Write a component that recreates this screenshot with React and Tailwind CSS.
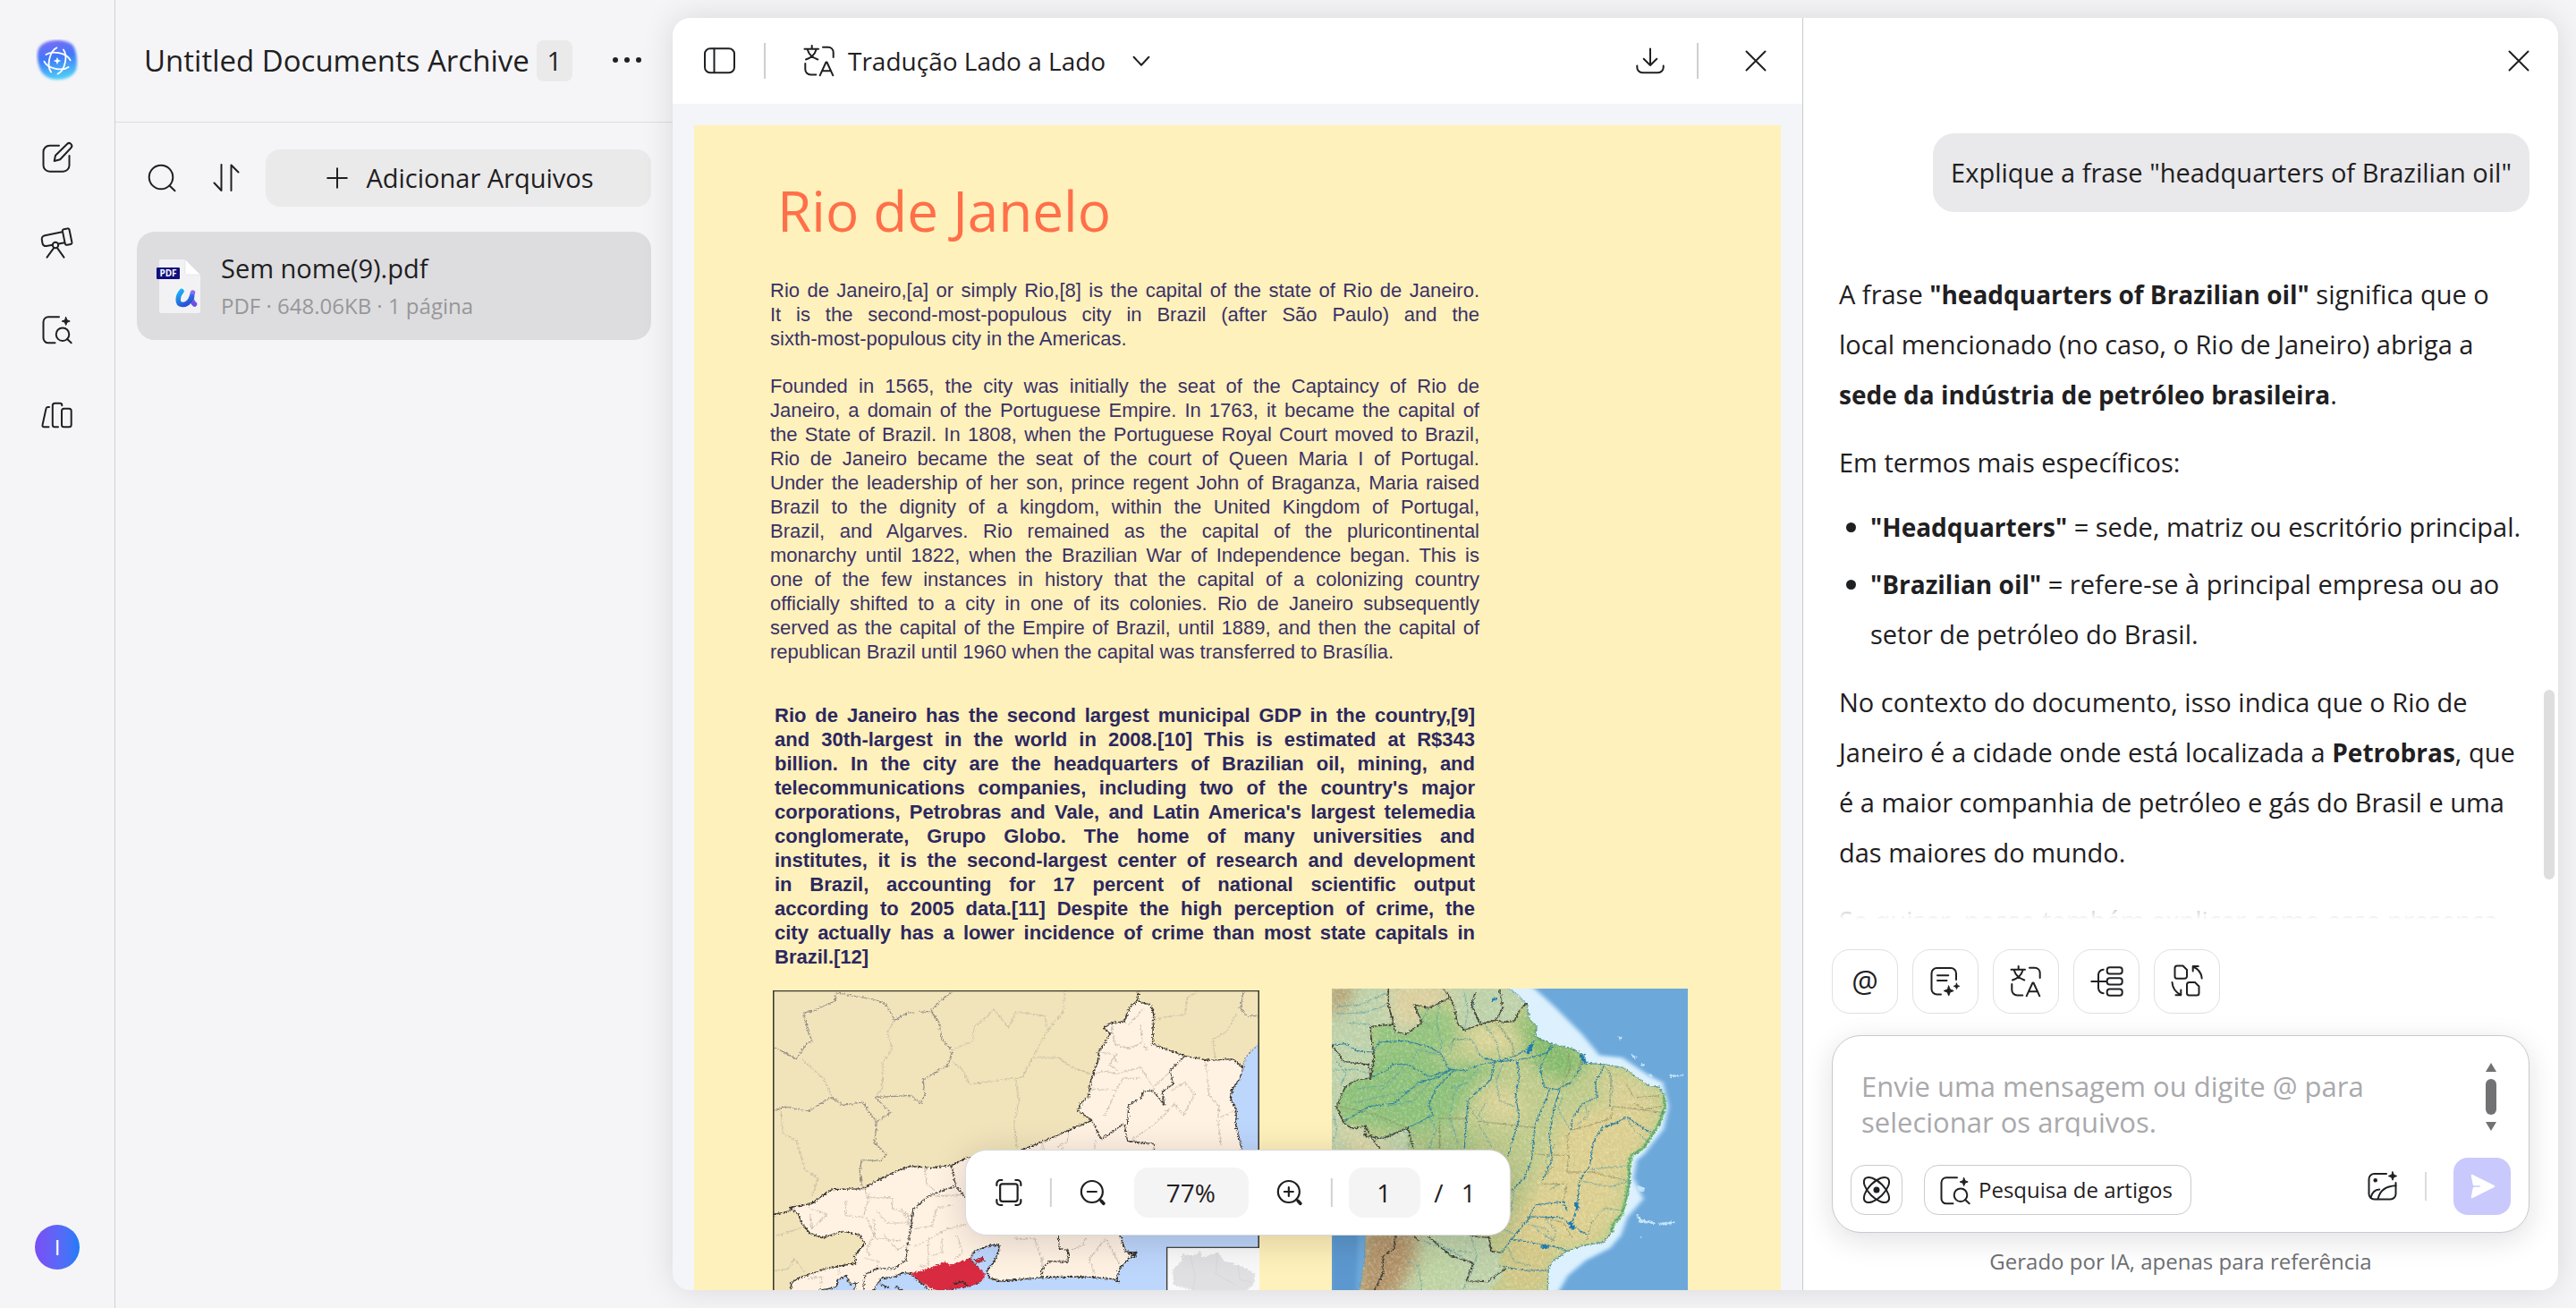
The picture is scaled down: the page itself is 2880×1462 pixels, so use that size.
import React from "react";

const SANS = "font-['Open_Sans','Noto_Sans',sans-serif]";
const ARIAL = "font-['Liberation_Sans',Arial,sans-serif]";

function Icon({ children, className = "size-10", strokeWidth = 2 }) {
  return (
    <svg
      viewBox="0 0 40 40"
      className={`${className} shrink-0`}
      fill="none"
      stroke="currentColor"
      strokeWidth={strokeWidth}
      strokeLinecap="round"
      strokeLinejoin="round"
      aria-hidden="true"
    >
      {children}
    </svg>
  );
}

function sparkle(x, y, r) {
  const k = r * 0.28;
  return `M${x} ${y - r}L${x + k} ${y - k}L${x + r} ${y}L${x + k} ${y + k}L${x} ${y + r}L${x - k} ${y + k}L${x - r} ${y}L${x - k} ${y - k}Z`;
}

function Sparkle({ x, y, r }) {
  return <path d={sparkle(x, y, r)} fill="currentColor" strokeWidth="1" />;
}

const EditIcon = () => (
  <Icon>
    <path d="M22 6.700H11.500a7 7 0 0 0-7 7v15a7 7 0 0 0 7 7h15a7 7 0 0 0 7-7V18" />
    <path d="M16.700 24l1.300-6.200L31 5a3 3 0 0 1 4.400 4.200L23.200 22.300z" />
  </Icon>
);

const TelescopeIcon = () => (
  <Icon>
    <path d="M25.500 7.300L6 11.200a4 4 0 0 0-3.200 4.600l.7 4.200a3.600 3.600 0 0 0 4.300 3l7-1.300M21.500 20.500l6.700-1.300" />
    <path d="M27.300 4.200l4-.8a1.800 1.800 0 0 1 2.200 1.400l2.900 14a1.800 1.800 0 0 1-1.400 2.200l-4 .8a1.800 1.800 0 0 1-2.200-1.400l-2.900-14a1.800 1.800 0 0 1 1.400-2.200z" />
    <circle cx="18" cy="22" r="3.200" />
    <path d="M16.200 25.200L8.500 35.700M20 25.200l7.500 10.500" />
  </Icon>
);

const DocSearchIcon = ({ className }) => (
  <Icon className={className}>
    <path d="M22 6.300H10a5.500 5.500 0 0 0-5.500 5.500v18a5.500 5.500 0 0 0 5.500 5.500h7.500" />
    <Sparkle x={29.700} y={11} r={4.500} />
    <circle cx="26" cy="25.700" r="7.300" />
    <path d="M31.200 31l4.500 4.300" />
  </Icon>
);

const LibraryIcon = () => (
  <Icon>
    <path d="M11 11H9.500a2 2 0 0 0-2 1.700L3.500 31a1.700 1.700 0 0 0 1.700 2.200h5.300" />
    <path d="M25.300 9.300V9a2.300 2.300 0 0 0-2.300-2.300h-5.700A2.500 2.500 0 0 0 14.800 9.200v21.500a2.500 2.500 0 0 0 2.500 2.500H21" />
    <rect x="25" y="12.700" width="10.700" height="20.500" rx="2.500" />
  </Icon>
);

const TranslateIcon = ({ className }) => (
  <Icon className={className}>
    <path d="M11.700 3v3.500M3.500 6.700H19M7 8c1.300 4.500 5.500 8.500 11.300 10.500M16.300 8C15 12.500 11 16.500 5 18.500" />
    <path d="M24 4.700h6a5.700 5.700 0 0 1 5.700 5.700V16M4.300 23v6.500a6 6 0 0 0 6 6h6" />
    <path d="M20.700 36.300L27.500 21.500h1l6.800 14.800M22.900 31.300h10.300" />
  </Icon>
);

const SummaryIcon = () => (
  <Icon>
    <path d="M32 18v-7a6 6 0 0 0-6-6H10.500a6 6 0 0 0-6 6v17.500a6 6 0 0 0 6 6H15" />
    <path d="M11 13.300h12.300M11 19h10.500" />
    <Sparkle x={23.700} y={30.500} r={5.500} />
    <Sparkle x={32.500} y={25.300} r={3.200} />
  </Icon>
);

const MindMapIcon = () => (
  <Icon>
    <path d="M3.300 20H20M16.700 6.700A6 6 0 0 0 11 12.700v14.600a6 6 0 0 0 5.700 6" />
    <rect x="20.700" y="4.300" width="17" height="7.300" rx="3" />
    <rect x="20.700" y="16.300" width="17" height="7.300" rx="3" />
    <rect x="20.700" y="28.400" width="17" height="7.300" rx="3" />
  </Icon>
);

const SwapIcon = () => (
  <Icon>
    <path d="M9 2.500h6.500L20 7v7.300a2.500 2.500 0 0 1-2.500 2.500H9a2.500 2.500 0 0 1-2.500-2.500V5A2.500 2.500 0 0 1 9 2.500z" />
    <path d="M22.500 21H29l4.500 4.500v7.500a2.500 2.500 0 0 1-2.500 2.500h-8.500A2.500 2.500 0 0 1 20 33v-9.500a2.500 2.500 0 0 1 2.500-2.500z" />
    <path d="M26.700 8.500V3h6M27 3.500c5.500 2.500 9.300 7 9.700 13" />
    <path d="M13.300 29.500v5.800H7.500M13 35C7.500 32 4 27.500 3.500 21" />
  </Icon>
);

const AtomIcon = () => (
  <Icon>
    <ellipse cx="20" cy="20" rx="18" ry="8.500" transform="rotate(45 20 20)" />
    <ellipse cx="20" cy="20" rx="18" ry="8.500" transform="rotate(-45 20 20)" />
    <circle cx="20" cy="20" r="2.500" fill="currentColor" />
  </Icon>
);

const ImageIcon = () => (
  <Icon>
    <path d="M24 6H10.500a6 6 0 0 0-6 6v16.500a6 6 0 0 0 6 6h18a6 6 0 0 0 6-6V16" />
    <circle cx="11.700" cy="13.300" r="1.300" fill="currentColor" />
    <path d="M6.500 32.500c1.500-5.500 4.500-8.800 9.700-9M14.500 34.300c2-9 7.500-14.500 20-15" />
    <Sparkle x={31} y={8.500} r={4.700} />
  </Icon>
);

const DownloadIcon = () => (
  <Icon>
    <path d="M20 6.500v18M12.700 17.700L20 25l7.300-7.300M5.300 25.500v1.700a6 6 0 0 0 6 6h17.400a6 6 0 0 0 6-6v-1.700" />
  </Icon>
);

const CloseIcon = () => (
  <Icon>
    <path d="M9.500 9.500l21 21M30.500 9.500l-21 21" />
  </Icon>
);

const PanelIcon = () => (
  <Icon>
    <rect x="4" y="6.300" width="33" height="27" rx="6" />
    <path d="M14.500 6.500v26.500" />
  </Icon>
);

const SearchIcon = () => (
  <Icon>
    <circle cx="19" cy="19" r="13.300" />
    <path d="M28.500 28.500l6 5.800" />
  </Icon>
);

const SortIcon = () => (
  <Icon>
    <path d="M14.500 5v29L6.500 25.500M25.500 34V5.500l8 8" />
  </Icon>
);

const FitIcon = () => (
  <Icon strokeWidth={2.200}>
    <rect x="10.300" y="10.300" width="19.500" height="19.500" rx="2.500" />
    <path d="M6.500 12v-2a4 4 0 0 1 4-4h2M27.500 6h2a4 4 0 0 1 4 4v2M33.500 28v2a4 4 0 0 1-4 4h-2M12.500 34h-2a4 4 0 0 1-4-4v-2" />
  </Icon>
);

function ZoomIcon({ plus }) {
  return (
    <Icon strokeWidth={2.200}>
      <circle cx="19" cy="19" r="12" />
      <path d={plus ? "M14 19h10M19 14v10" : "M14 19h10"} />
      <path d="M27.500 27.500l1.500 1.500" />
      <path d="M29.500 29.500l2.500 2.700" strokeWidth="3.800" />
    </Icon>
  );
}

function Logo() {
  return (
    <svg viewBox="0 0 48 48" className="size-12" aria-hidden="true">
      <defs>
        <linearGradient id="logoFill" x1="0.300" y1="0" x2="0.500" y2="1">
          <stop offset="0" stopColor="#7a6cf6" />
          <stop offset="0.450" stopColor="#3f78f8" />
          <stop offset="1" stopColor="#4fd0f8" />
        </linearGradient>
        <filter id="logoSoft" x="-20%" y="-20%" width="140%" height="140%">
          <feGaussianBlur stdDeviation="1.500" />
        </filter>
      </defs>
      <path
        d="M8 5C17-1 34 0 41 6c5 6 6 21 4 28-3 8-13 11-21 11C14 45 6 39 4 31 1 21 0 10 8 5z"
        fill="url(#logoFill)"
        filter="url(#logoSoft)"
      />
      <g fill="none" stroke="#fff" strokeWidth="1.800" strokeLinecap="round">
        <ellipse cx="24" cy="24" rx="15.500" ry="9" transform="rotate(12 24 24)" pathLength="100" strokeDasharray="39 11" strokeDashoffset="-6" />
        <ellipse cx="24" cy="24" rx="15.500" ry="9" transform="rotate(102 24 24)" pathLength="100" strokeDasharray="39 11" strokeDashoffset="-6" />
      </g>
      <path d={sparkle(24, 24, 4.200)} fill="#fff" />
    </svg>
  );
}

function PdfIcon() {
  return (
    <svg viewBox="0 0 52 64" className="h-16 w-[52px] shrink-0" aria-hidden="true">
      <defs>
        <linearGradient id="uLeft" x1="0" y1="0" x2="0.600" y2="1">
          <stop offset="0" stopColor="#16b4f6" />
          <stop offset="1" stopColor="#2b4fd8" />
        </linearGradient>
        <linearGradient id="uRight" x1="0" y1="0" x2="0" y2="1">
          <stop offset="0" stopColor="#8f6bf5" />
          <stop offset="1" stopColor="#6a4fe0" />
        </linearGradient>
      </defs>
      <path d="M4 2h28l17 17v41a2 2 0 0 1-2 2H5a2 2 0 0 1-2-2V3a1 1 0 0 1 1-1z" fill="#f2f2f4" />
      <path d="M32 2l17 17H34a2 2 0 0 1-2-2z" fill="#fff" stroke="#dcdce0" strokeWidth="0.600" />
      <rect x="0" y="11" width="26" height="13" rx="1" fill="#10107e" />
      <text x="13" y="21.300" textAnchor="middle" fontSize="10" fontWeight="700" fill="#fff" fontFamily="Open Sans, sans-serif">
        PDF
      </text>
      <path d="M40.500 39c-1.500 4-2 10 2 13" fill="none" stroke="url(#uRight)" strokeWidth="5.500" strokeLinecap="round" />
      <path d="M28 37.500c-4.500 5-6 14.500 1 15 5 .3 8.500-4 10.500-9" fill="none" stroke="url(#uLeft)" strokeWidth="5.500" strokeLinecap="round" />
    </svg>
  );
}

/* Political map of the state of Rio de Janeiro. */
const GREY_BORDERS = [
  "M36 240L65 255L105 280L130 235L150 220L138 180L125 125L150 120L218 85L220 58L270 68L330 80L365 95L392 150L430 125L498 120L518 92L557 58",
  "M498 120L522 160L530 215L560 252L548 300L475 350L480 400L468 430L440 402L395 405L335 408L380 460L340 490L333 560L368 600L350 622L295 618L290 660L298 715",
  "M36 455L70 440L140 455L208 408L240 435L300 425L318 460L340 490",
  "M1410 55L1402 110L1420 135L1457 136",
];
const FAINT_BORDERS = [
  "M392 150L370 190L385 245L358 290L355 380L335 408",
  "M120 280L155 315L185 345L208 408",
  "M560 250L620 220L625 170L660 140L682 112L725 175L745 122L830 135L838 185L795 275L765 340L610 365L590 315L560 290",
  "M888 55L885 120L838 185M795 275L870 275L905 305L968 332",
  "M745 345L755 420L740 500L750 580",
  "M60 455L65 530L105 555L130 650L168 680L150 740",
  "M1275 58L1245 75L1240 130L1180 140L1150 150M1390 130L1360 190L1320 215L1328 278",
  "M120 845L60 870L45 870M36 990L80 985L100 950L128 995",
];
const STATE =
  "M85 778L150 765L185 735L210 718L300 715L345 685L410 650L440 640L500 645L558 637L600 612L680 610L770 582L850 545L968 485L928 455L935 430L958 405L965 350L985 290L988 255L1003 230L1022 195L1002 175L1020 160L1062 155L1078 108L1100 85L1140 100L1148 130L1145 230L1180 245L1240 270L1310 285L1380 280L1410 310L1400 345L1378 380L1372 410L1390 450L1388 500L1405 580L1390 640L1250 740L1120 790L1050 830L1053 880L1065 925L1095 930L1080 945L1050 980L1040 1015L1048 1030L1030 1018L950 1010L830 1012L700 1025L670 1015L662 990L682 960L695 930L697 903L670 905L625 925L612 950L650 1000L640 1030L600 1044L500 1060L470 1032L440 1000L415 996L395 1010L355 1015L335 1045L320 1080L270 1060L282 1030L262 1036L250 1006L225 1020L222 1045L170 1056L150 1110L88 1110L90 1030L120 1010L200 980L278 965L275 940L305 900L290 870L240 858L180 880L145 865L120 830L110 800Z";
const STATE_REGIONS = [
  "M558 637L570 705L600 745L640 800",
  "M570 705L490 740L445 785L438 860L430 900L425 955L390 982L335 985L305 1005L300 1060",
  "M968 485L995 550L1062 497L1072 555L1150 565L1150 600",
  "M1072 497L1075 435L1112 410L1118 390L1145 385L1180 435L1172 390L1205 365L1196 318L1238 272",
  "M870 870L872 915L900 922L898 960L845 958L822 985L820 1012",
];
const STATE_FAINT = [
  "M975 330L1005 320L1040 330L1110 308L1150 380M1005 470L1040 385L965 380",
  "M1110 345L1060 345L1040 380M1025 165L1035 230L1075 245L1115 225L1130 250",
  "M1085 550L1150 500L1210 430L1235 470L1268 400L1240 358L1200 385",
  "M1300 290L1310 400L1340 440L1335 480L1345 570M1345 475L1388 450",
  "M140 780L195 800L150 850L145 800M250 755L248 805L300 810L320 730M305 715L310 745L385 745L385 780L430 800L435 830L370 830L340 790",
  "M310 810L335 880L410 890M410 780L440 850M480 645L485 700L510 720",
  "M450 910L490 885L490 975L465 975M490 885L545 850L620 830M530 880L530 930L500 940M575 870L590 930L570 950M500 740L600 735M450 850L500 840L515 780L560 770",
  "M740 880L770 885L800 880L825 970M820 990L825 945M1010 880L960 950L975 1000M1010 885L1040 950L1050 970M910 920L940 905L950 880",
  "M825 560L825 600M900 530L895 560L865 575M880 570L890 600M975 580L980 550",
  "M1040 260L1020 300L1045 320M985 255L1030 265L1040 290M1075 165L1120 110M1110 165L1115 225M1150 370L1200 320",
  "M330 810L335 860L310 920L320 940M140 1015L180 1010L175 1045M230 975L230 1005M300 945L345 960L340 985M360 870L400 920L430 900",
];

function RioMap() {
  return (
    <svg viewBox="36 50 1421 1260" preserveAspectRatio="none" className="mt-0.5 h-[420px] w-[544px] shrink-0" role="img" aria-label="Mapa do estado do Rio de Janeiro">
      <defs>
        <filter id="coast" x="-5%" y="-5%" width="110%" height="110%">
          <feTurbulence type="fractalNoise" baseFrequency="0.180" numOctaves="2" seed="4" />
          <feDisplacementMap in="SourceGraphic" scale="14" xChannelSelector="R" yChannelSelector="G" />
        </filter>
      </defs>
      <rect x="36" y="50" width="1421" height="1260" fill="#f1e4bb" />
      <g filter="url(#coast)" fill="none" strokeLinejoin="round">
        <path
          d="M1470 205L1445 240L1418 272L1408 310L1300 600L900 800L640 890L600 960L400 1000L240 1000L150 1060L120 1320L1470 1320Z"
          fill="#bdd6fc"
          stroke="#77736b"
          strokeWidth="2"
        />
        <g stroke="#978f88" strokeWidth="3.500">
          {GREY_BORDERS.map((d) => <path key={d} d={d} />)}
        </g>
        <g stroke="#cdc3a6" strokeWidth="3">
          {FAINT_BORDERS.map((d) => <path key={d} d={d} />)}
        </g>
        <path d={STATE} fill="#fff2e3" stroke="#3a362f" strokeWidth="4" />
        <path d="M36 803L85 790L95 775M1100 88L1104 50" stroke="#3a362f" strokeWidth="4" />
        <g stroke="#cdc1b2" strokeWidth="2.800">
          {STATE_FAINT.map((d) => <path key={d} d={d} />)}
        </g>
        <g stroke="#45403a" strokeWidth="3.500">
          {STATE_REGIONS.map((d) => <path key={d} d={d} />)}
        </g>
        <path d="M440 998L485 985L540 960L552 970L612 950L632 975L655 1000L650 1022L620 1040L520 1058L500 1050L470 1030Z" fill="#d8293f" />
        <path d="M625 955L650 945L652 958L632 962Z" fill="#d8293f" stroke="#5a2020" strokeWidth="2" />
        <path d="M565 1035L590 1026L605 1040M350 1035L375 1048M395 1045L415 1058M1075 932L1098 928L1092 942Z" stroke="#33302b" strokeWidth="5" />
      </g>
      <rect x="1187" y="912" width="275" height="400" fill="#f9f9fa" stroke="#3a362f" strokeWidth="3.500" />
      <path
        filter="url(#coast)"
        d="M1205 985L1230 960L1232 932L1262 940L1285 925L1290 945L1335 928L1355 958L1400 972L1445 1000L1440 1030L1420 1060L1390 1110L1340 1160L1310 1090L1262 1056L1205 1036Z"
        fill="#e0e0e2"
      />
      <path d="M1255 940L1270 1010L1262 1056M1335 930L1330 1000L1390 1040M1395 975L1400 1020L1440 1030" fill="none" stroke="#d4d4d6" strokeWidth="2" />
      <path d="M38 1310V52H1455V912" fill="none" stroke="#3a362f" strokeWidth="4" />
    </svg>
  );
}

/* Relief map of Brazil. */
const COAST =
  "775 95L785 150L805 170L800 205L845 230L900 245L930 262L945 295L1000 300L1050 310L1085 340L1120 370L1150 375L1163 400L1167 440L1150 500L1125 545L1105 580L1072 605L1065 640L1068 690L1055 760L1045 800L1020 835L1015 865L995 895L940 905L890 925L850 960L838 985L835 1056L828 1310";
const CONTINENT = `M200 20L690 20L745 60L${COAST}L300 1310L303 1056L318 960L320 870L260 700L215 600Z`;
const BRAZIL = `M${COAST}L690 1310L665 1060L700 1020L716 985L697 975L702 930L675 925L670 880L620 875L600 780L470 700L440 580L440 512L370 548L320 540L320 505L285 515L258 495L238 440L265 370L300 350L335 345L345 270L335 200L335 172L400 165L405 190L435 198L480 160L458 98L500 110L560 75L572 110L580 160L600 185L645 165L690 150L710 158L740 155L760 110Z`;
const SHELF =
  "M700 20L770 20L850 105L930 200L980 272L1045 280L1120 340L1158 362L1174 440L1160 515L1108 595L1084 620L1075 680L1102 750L1080 780L1058 810L1040 870L1010 912L940 955L890 1005L865 1056L860 1320L780 1320L600 600Z";
const MAIN_RIVERS = [
  "M225 235L260 230L300 255L340 258L360 225L430 220L500 240L535 265L555 315L600 320L650 298L700 288L750 268L785 240L800 215",
  "M340 340L380 320L400 298L440 300L470 320L500 340L560 318",
  "M640 265L660 280L700 290L745 285L790 275L830 262L850 240",
  "M560 318L520 345L470 360L400 430L330 440L260 490",
  "M845 235L815 310L825 375L870 385L855 440L840 540L848 620L820 690",
  "M840 385L830 420L800 500L790 620L770 680L735 720",
  "M750 290L755 345L745 400L755 480L735 560L722 610",
  "M685 290L675 350L610 420L605 500L600 580",
  "M1035 495L990 510L965 560L955 640L925 690L920 770L905 830",
  "M1125 528L1060 475L1020 500L985 512",
  "M705 930L730 890L780 820L800 770L880 760L890 790",
  "M780 810L870 812L905 840L945 870",
  "M735 885L830 905L870 915L890 925M700 975L770 990L835 990",
  "M570 320L520 380L500 430L510 470L440 512",
  "M940 262L930 310L900 360L870 380M995 305L970 360L975 410L935 430L905 480L902 520",
];
const SMALL_RIVERS = [
  "M240 105L300 100L380 60M240 130L320 125L380 100M270 160L330 165M225 320L290 315L330 330M250 370L265 330L240 290",
  "M530 100L520 160L535 220L530 265M500 110L480 150L510 180M600 60L610 120L600 185M620 80L640 160",
  "M430 300L400 350L360 390M480 360L440 390L350 410L290 430M420 320L370 370L300 380M500 360L460 420L380 440",
  "M560 260L570 215L620 215L640 260M700 165L730 220L745 260M660 170L690 220L700 280M450 290L470 250L540 270",
  "M600 350L570 400L560 470M640 310L610 360L560 380M710 300L690 350L700 420L740 440M800 290L820 330",
  "M500 470L520 520L500 580M560 480L580 560M640 500L680 580M660 430L640 470L670 505",
  "M880 400L865 450L900 520M1010 320L1020 380L1010 440M1060 480L1080 520L1120 560M940 430L950 470L920 500",
  "M960 650L1060 640M930 690L1010 710L1065 690M960 830L1000 780L1045 790M800 850L850 890M830 820L860 860L850 890",
  "M740 720L730 800M760 830L830 850L850 890M870 700L840 720M860 560L830 620L840 660",
  "M480 890L550 920L620 930M500 880L620 965M440 960L470 975L480 1056M620 880L635 940L620 1000L595 1056",
  "M230 470L240 520L228 560M345 555L420 520L460 540M450 550L440 580M690 840L745 870M720 900L740 960L790 975",
];
const BORDERS = [
  "M385 45L385 100L400 165M560 75L540 45M630 60L620 100L645 165M700 50L708 110L690 150",
  "M225 235L260 290L330 300L335 345M320 505L345 560L360 580M440 512L455 580",
  "M500 878L560 940L625 965L605 1025L665 1028L716 985M620 875L670 880L675 925L702 930",
  "M405 870L400 920L370 940L370 1000L345 1056M460 878L470 890",
  "M335 172L335 200L345 270L335 345L300 350L265 370L238 440L258 495L285 515L320 505",
  "M335 172L400 165L405 190L435 198L480 160L458 98L500 110L560 75L572 110L580 160L600 185L645 165L690 150L710 158L740 155L760 110L775 95",
  "M320 505L320 540L370 548L440 512",
];
const STATE_LINES = [
  "M605 480L530 480L530 580M605 420L640 490L800 512M740 275L735 230L690 160M555 240L570 215L595 215M870 385L900 310L890 250M935 270L920 320",
  "M902 520L950 505L1015 480L1020 440L1160 460M800 600L895 605L890 540L902 520M895 605L890 660L960 660L1065 690M1000 310L1015 340L1010 440",
  "M240 440L330 460L440 512M820 690L850 640M820 700L890 700L880 760M780 820L735 885M905 880L880 830L830 815M960 830L945 890M1060 370L1080 410L1150 405M1080 430L1110 450L1155 440",
];

function BrazilMap() {
  return (
    <svg viewBox="225 45 1007 1260" preserveAspectRatio="none" className="h-[420px] w-[398px] shrink-0" role="img" aria-label="Mapa de relevo do Brasil">
      <defs>
        <filter id="shore" x="-5%" y="-5%" width="110%" height="110%">
          <feTurbulence type="fractalNoise" baseFrequency="0.160" numOctaves="2" seed="9" />
          <feDisplacementMap in="SourceGraphic" scale="12" xChannelSelector="R" yChannelSelector="G" />
        </filter>
        <filter id="soft" x="-10%" y="-10%" width="120%" height="120%">
          <feGaussianBlur stdDeviation="5" />
        </filter>
        <filter id="relief" x="0" y="0" width="100%" height="100%">
          <feTurbulence type="fractalNoise" baseFrequency="0.120 0.070" numOctaves="4" seed="3" />
          <feColorMatrix values="0 0 0 0 0.450  0 0 0 0 0.380  0 0 0 0 0.180  1.800 0 0 0 -0.800" />
          <feComposite in2="SourceGraphic" operator="in" />
        </filter>
        <filter id="ridge" x="0" y="0" width="100%" height="100%">
          <feTurbulence type="fractalNoise" baseFrequency="0.160 0.100" numOctaves="3" seed="17" />
          <feColorMatrix values="0 0 0 0 1  0 0 0 0 0.980  0 0 0 0 0.780  0 2 0 0 -0.850" />
          <feComposite in2="SourceGraphic" operator="in" />
        </filter>
        <filter id="blotch" x="-20%" y="-20%" width="140%" height="140%">
          <feGaussianBlur stdDeviation="24" />
        </filter>
        <clipPath id="brazilShape"><path d={BRAZIL} /></clipPath>
        <clipPath id="continentShape"><path d={CONTINENT} /></clipPath>
      </defs>
      <rect x="225" y="45" width="1007" height="1260" fill="#6da8db" />
      <g filter="url(#soft)">
        <path d={SHELF} fill="#9fcdf0" stroke="#9fcdf0" strokeWidth="14" />
        <path d={SHELF} fill="#dcf1fd" />
        <path d="M225 860L300 860L285 1320L225 1320Z" fill="#5b98cf" />
      </g>
      <g fill="#c4e4f9" filter="url(#shore)">
        <path d="M1090 705l22 8-8 14-14-6zM1085 800l20 20 30 5 5 10-45-5zM1150 830l45-5v8l-40 6zM1070 265l18 8-5 12zM1120 330l14 6-6 10zM1180 335l40-3v6l-38 5z" />
        <path d="M1035 205l12 4-6 8zM1100 295l10 6-8 6zM1095 875l8 3-6 5z" />
      </g>
      <g filter="url(#shore)">
        <path d={CONTINENT} fill="#bcd2ab" stroke="#4d8fae" strokeWidth="2" />
        <g clipPath="url(#continentShape)">
          <g filter="url(#blotch)">
            <path d="M225 30L290 40L225 160Z" fill="#b08a5c" />
            <path d="M390 30L560 30L560 90L430 190L390 130Z" fill="#dccf9f" />
            <path d="M225 480L330 540L420 600L300 640Z" fill="#ded8a8" />
            <path d="M310 850L470 850L465 960L400 1090L290 1090Z" fill="#b08f66" />
            <path d="M480 880L600 960L560 1060L450 1060Z" fill="#bcd3a2" />
          </g>
        </g>
        <path d={BRAZIL} fill="#bdcb8b" />
        <g clipPath="url(#brazilShape)">
          <g filter="url(#blotch)">
            <path d="M220 330L420 220L560 300L720 290L640 360L560 500L440 530L230 490Z" fill="#88c078" />
            <path d="M330 150L560 110L590 230L500 270L340 270Z" fill="#8fc37b" />
            <path d="M740 120L800 150L950 270L900 370L800 310Z" fill="#7fb969" />
            <path d="M610 180L740 180L740 260L610 250Z" fill="#ddd59a" />
            <path d="M640 380L740 380L780 480L670 500Z" fill="#d8d296" />
            <path d="M440 520L640 510L620 640L470 640Z" fill="#a6c583" />
            <path d="M890 470L1150 400L1120 560L1050 660L1040 800L960 900L800 920L720 860L800 700Z" fill="#dccf8f" />
            <path d="M1000 320L1090 360L1160 440L1000 470Z" fill="#d9cf93" />
            <path d="M720 880L860 900L820 1060L700 1060Z" fill="#d2c684" />
          </g>
        </g>
        <path d="M1163 400L1167 440L1150 500L1125 545L1105 580L1072 605L1065 640L1065 690L1055 760L1045 800L1020 835L1015 865" fill="none" stroke="#7fbf6a" strokeWidth="10" />
        <path d={CONTINENT} fill="#fff" filter="url(#relief)" opacity="0.300" />
        <path d={CONTINENT} fill="#fff" filter="url(#ridge)" opacity="0.400" />
        <g fill="none" strokeLinejoin="round" strokeLinecap="round">
          <g stroke="#8c8a64" strokeWidth="2">{STATE_LINES.map((d) => <path key={d} d={d} />)}</g>
          <g stroke="#5f9ea6" strokeWidth="2">{SMALL_RIVERS.map((d) => <path key={d} d={d} />)}</g>
          <g stroke="#2b7fa3" strokeWidth="3">{MAIN_RIVERS.map((d) => <path key={d} d={d} />)}</g>
          <path d="M915 765L920 785M900 830L905 850M820 910L835 912M790 235L780 260M680 85L688 80M930 270L945 295" stroke="#1d79b5" strokeWidth="9" />
          <path d={`M${COAST}`} stroke="#4c8f86" strokeWidth="2.500" />
          <g stroke="#46463f" strokeWidth="4">{BORDERS.map((d) => <path key={d} d={d} />)}</g>
        </g>
      </g>
    </svg>
  );
}

const INTRO = [
  "Rio de Janeiro,[a] or simply Rio,[8] is the capital of the state of Rio de Janeiro.",
  "It is the second-most-populous city in Brazil (after São Paulo) and the",
  "sixth-most-populous city in the Americas.",
];
const HISTORY = [
  "Founded in 1565, the city was initially the seat of the Captaincy of Rio de",
  "Janeiro, a domain of the Portuguese Empire. In 1763, it became the capital of",
  "the State of Brazil. In 1808, when the Portuguese Royal Court moved to Brazil,",
  "Rio de Janeiro became the seat of the court of Queen Maria I of Portugal.",
  "Under the leadership of her son, prince regent John of Braganza, Maria raised",
  "Brazil to the dignity of a kingdom, within the United Kingdom of Portugal,",
  "Brazil, and Algarves. Rio remained as the capital of the pluricontinental",
  "monarchy until 1822, when the Brazilian War of Independence began. This is",
  "one of the few instances in history that the capital of a colonizing country",
  "officially shifted to a city in one of its colonies. Rio de Janeiro subsequently",
  "served as the capital of the Empire of Brazil, until 1889, and then the capital of",
  "republican Brazil until 1960 when the capital was transferred to Brasília.",
];
const ECONOMY = [
  "Rio de Janeiro has the second largest municipal GDP in the country,[9]",
  "and 30th-largest in the world in 2008.[10] This is estimated at R$343",
  "billion. In the city are the headquarters of Brazilian oil, mining, and",
  "telecommunications companies, including two of the country's major",
  "corporations, Petrobras and Vale, and Latin America's largest telemedia",
  "conglomerate, Grupo Globo. The home of many universities and",
  "institutes, it is the second-largest center of research and development",
  "in Brazil, accounting for 17 percent of national scientific output",
  "according to 2005 data.[11] Despite the high perception of crime, the",
  "city actually has a lower incidence of crime than most state capitals in",
  "Brazil.[12]",
];

function Justified({ lines, className = "" }) {
  return (
    <p className={`text-[22px] leading-[27px] ${className}`}>
      {lines.map((line, i) => (
        <span key={line} className={i < lines.length - 1 ? "block text-justify [text-align-last:justify]" : "block"}>
          {line}{" "}
        </span>
      ))}
    </p>
  );
}

function Rail() {
  return (
    <nav className="flex w-[129px] shrink-0 flex-col items-center border-r border-[#cfd0d3] pt-11 pb-[43px]">
      <a href="#inicio" aria-label="Início"><Logo /></a>
      <div className="mt-16 flex flex-col gap-14">
        <button type="button" aria-label="Nova conversa"><EditIcon /></button>
        <button type="button" aria-label="Explorar"><TelescopeIcon /></button>
        <button type="button" aria-label="Pesquisar documentos"><DocSearchIcon /></button>
        <button type="button" aria-label="Biblioteca"><LibraryIcon /></button>
      </div>
      <button type="button" className="mt-auto size-[50px] rounded-full bg-linear-to-r from-[#7a4df5] to-[#1a7cf8] text-2xl text-white">
        I
      </button>
    </nav>
  );
}

function FilesPanel() {
  return (
    <aside className="w-[623px] shrink-0">
      <header className="flex h-[137px] items-center border-b border-[#dcdde0] pr-[31px] pl-8">
        <h1 className="text-[33px] whitespace-nowrap">Untitled Documents Archive</h1>
        <span className="ml-2 flex h-[46px] w-10 items-center justify-center rounded-lg bg-[#eaeaeb] text-[29px]">1</span>
        <button type="button" aria-label="Mais opções" className="ml-auto">
          <Icon>
            <g fill="currentColor" stroke="none">
              <circle cx="7" cy="19" r="3" />
              <circle cx="20" cy="19" r="3" />
              <circle cx="33" cy="19" r="3" />
            </g>
          </Icon>
        </button>
      </header>
      <div className="mt-[30px] flex items-center pr-6 pl-8">
        <button type="button" aria-label="Buscar"><SearchIcon /></button>
        <button type="button" aria-label="Ordenar" className="ml-8"><SortIcon /></button>
        <button type="button" className="ml-6 flex h-16 flex-1 items-center justify-center gap-4 rounded-2xl bg-[#eaeaeb] text-[29px]">
          <Icon className="size-8" strokeWidth={2.500}>
            <path d="M20 6.500v27M6.500 20h27" />
          </Icon>
          Adicionar Arquivos
        </button>
      </div>
      <a href="#arquivo" className="mx-6 mt-7 flex h-[121px] items-center gap-5 rounded-[20px] bg-[#dddddf] pl-[22px]">
        <PdfIcon />
        <span className="flex flex-col gap-1">
          <span className="text-[29px] leading-10">Sem nome(9).pdf</span>
          <span className="text-2xl leading-9 text-[#97979a]">PDF · 648.06KB · 1 página</span>
        </span>
      </a>
    </aside>
  );
}

function ViewerHeader() {
  return (
    <header className="flex h-24 shrink-0 items-center bg-white pr-8 pl-8">
      <button type="button" aria-label="Alternar painel"><PanelIcon /></button>
      <span className="ml-[30px] h-10 w-0.5 bg-[#cfcfd2]" />
      <button type="button" aria-haspopup="menu" className="ml-10 flex items-center text-[28px]">
        <TranslateIcon />
        <span className="ml-3">Tradução Lado a Lado</span>
        <Icon className="ml-7 size-6" strokeWidth={3.300}>
          <path d="M6 13l14 15 14-15" />
        </Icon>
      </button>
      <button type="button" aria-label="Baixar" className="ml-auto"><DownloadIcon /></button>
      <span className="mr-11 ml-8 h-10 w-0.5 bg-[#cfcfd2]" />
      <button type="button" aria-label="Fechar documento"><CloseIcon /></button>
    </header>
  );
}

function ZoomBar() {
  return (
    <div className="absolute bottom-[61px] left-1/2 flex h-24 -translate-x-1/2 items-center rounded-3xl border border-[#d8d8dc] bg-white pr-[38px] pl-7 text-[28px] shadow-[0_6px_40px_rgba(0,0,0,0.16)]">
      <button type="button" aria-label="Ajustar à página"><FitIcon /></button>
      <span className="mx-[26px] h-8 w-0.5 bg-[#d2d2d5]" />
      <button type="button" aria-label="Diminuir zoom"><ZoomIcon /></button>
      <button type="button" className="mx-[26px] h-14 w-32 rounded-2xl bg-[#f4f4f5]">77%</button>
      <button type="button" aria-label="Aumentar zoom"><ZoomIcon plus /></button>
      <span className="mr-[18px] ml-[26px] h-8 w-0.5 bg-[#d2d2d5]" />
      <input aria-label="Página" defaultValue="1" className="h-14 w-20 rounded-2xl bg-[#f4f4f5] text-center" />
      <span className="ml-4 flex gap-5"><span>/</span><span>1</span></span>
    </div>
  );
}

function DocumentPage() {
  return (
    <article className={`min-h-full bg-[#fff1bb] pt-[59px] pl-[85px] text-[#3a3168] ${ARIAL}`}>
      <div className="w-[793px]">
        <h2 className={`pl-2 text-[62px] leading-[72px] text-[#ff6f49] ${SANS}`}>Rio de Janelo</h2>
        <Justified lines={INTRO} className="mt-10" />
        <Justified lines={HISTORY} className="mt-[26px]" />
        <Justified lines={ECONOMY} className="mx-[5px] mt-11 font-bold text-[#2b2760]" />
      </div>
      <div className="mt-[22px] ml-[3px] flex items-start gap-[81px]">
        <RioMap />
        <BrazilMap />
      </div>
    </article>
  );
}

function Viewer() {
  return (
    <section className="flex min-w-0 flex-1 flex-col">
      <ViewerHeader />
      <div className="relative min-h-0 flex-1 bg-[#f4f5f8]">
        <div className="h-full overflow-hidden px-6 pt-6">
          <DocumentPage />
        </div>
        <ZoomBar />
      </div>
    </section>
  );
}

function Strong({ children }) {
  return <strong className="text-[28px] font-bold">{children}</strong>;
}

function Bullet({ children }) {
  return (
    <li className="flex gap-4">
      <span className="ml-2 flex h-[56px] shrink-0 items-center">
        <span className="size-[11px] rounded-full bg-[#1f2022]" />
      </span>
      <span className="min-w-0">{children}</span>
    </li>
  );
}

function Answer() {
  return (
    <div className="mt-16 pr-7 pl-10 leading-[56px]">
      <p>
        A frase <Strong>"headquarters of Brazilian oil"</Strong> significa que o local mencionado (no caso, o Rio de Janeiro) abriga a{" "}
        <Strong>sede da indústria de petróleo brasileira</Strong>.
      </p>
      <p className="mt-5">Em termos mais específicos:</p>
      <ul className="mt-4 flex flex-col gap-2">
        <Bullet>
          <Strong>"Headquarters"</Strong> = sede, matriz ou escritório principal.
        </Bullet>
        <Bullet>
          <Strong>"Brazilian oil"</Strong> = refere-se à principal empresa ou ao setor de petróleo do Brasil.
        </Bullet>
      </ul>
      <p className="mt-5">
        No contexto do documento, isso indica que o Rio de Janeiro é a cidade onde está localizada a <Strong>Petrobras</Strong>, que é a
        maior companhia de petróleo e gás do Brasil e uma das maiores do mundo.
      </p>
      <p className="mt-5 text-[#77777a]">Se quiser, posso também explicar como essa presença</p>
    </div>
  );
}

function Composer() {
  const tool = "flex h-[72px] w-[74px] items-center justify-center rounded-[20px] border border-[#dfdfe6] bg-white";
  return (
    <div className="shrink-0 px-8 pt-[33px]">
      <div className="flex gap-4">
        <button type="button" aria-label="Mencionar arquivo" className={`${tool} text-[33px]`}>@</button>
        <button type="button" aria-label="Resumir" className={tool}><SummaryIcon /></button>
        <button type="button" aria-label="Traduzir" className={tool}><TranslateIcon /></button>
        <button type="button" aria-label="Mapa mental" className={tool}><MindMapIcon /></button>
        <button type="button" aria-label="Converter" className={tool}><SwapIcon /></button>
      </div>
      <form className="mt-6 rounded-[32px] border border-[#c9c9ce] bg-white pt-[30px] pb-[19px] shadow-[0_8px_32px_rgba(20,20,50,0.13)]">
        <div className="flex justify-between pr-9 pl-8">
          <textarea
            aria-label="Mensagem"
            placeholder="Envie uma mensagem ou digite @ para selecionar os arquivos."
            className="mt-1.5 h-[76px] w-[680px] resize-none overflow-hidden text-[31px] leading-10 outline-none placeholder:text-[#a9a9ac]"
          />
          <div className="flex flex-col items-center" aria-hidden="true">
            <svg viewBox="0 0 12 10" className="h-2.5 w-3"><path d="M6 0l6 10H0z" fill="#727274" /></svg>
            <span className="my-2 h-10 w-3 rounded-full bg-[#727274]" />
            <svg viewBox="0 0 12 10" className="h-2.5 w-3"><path d="M6 10L0 0h12z" fill="#727274" /></svg>
          </div>
        </div>
        <div className="mt-6 flex items-end px-5">
          <button type="button" aria-label="Raciocínio" className="flex h-14 w-[58px] items-center justify-center rounded-2xl border border-[#cbcbd0]">
            <AtomIcon />
          </button>
          <button type="button" className="ml-6 flex h-14 items-center gap-1.5 rounded-2xl border border-[#cbcbd0] pr-5 pl-3.5 text-2xl">
            <DocSearchIcon />
            Pesquisa de artigos
          </button>
          <span className="ml-auto flex h-16 items-center">
            <button type="button" aria-label="Gerar imagem"><ImageIcon /></button>
            <span className="mr-[30px] ml-[27px] h-8 w-0.5 bg-[#dcdce0]" />
            <button type="submit" aria-label="Enviar" className="flex size-16 items-center justify-center rounded-2xl bg-[#c9c9fd]">
              <Icon>
                <path d="M9 8l24 12L9 32l2-10h8v-4h-8z" fill="#fff" stroke="#fff" strokeWidth="2.500" />
              </Icon>
            </button>
          </span>
        </div>
      </form>
      <p className="flex h-16 items-center justify-center text-2xl text-[#6d6e71]">Gerado por IA, apenas para referência</p>
    </div>
  );
}

function Chat() {
  return (
    <section className="flex w-[845px] shrink-0 flex-col border-l border-[#c8c9cc] bg-white text-[29px]">
      <header className="flex h-24 shrink-0 items-center justify-end pr-6">
        <button type="button" aria-label="Fechar conversa"><CloseIcon /></button>
      </header>
      <div className="relative min-h-0 flex-1 overflow-hidden">
        <div className="flex justify-end pt-[33px] pr-8">
          <p className="flex h-[88px] items-center rounded-3xl bg-[#e9e9eb] px-5 whitespace-nowrap">Explique a frase "headquarters of Brazilian oil"</p>
        </div>
        <Answer />
        <div className="absolute inset-x-0 bottom-0 h-8 bg-linear-to-b from-white/0 to-white" />
        <span className="absolute top-[655px] right-1 h-[212px] w-3 rounded-full bg-[#dededf]" />
      </div>
      <Composer />
    </section>
  );
}

export default function App() {
  return (
    <div className={`flex h-screen overflow-hidden bg-[#f5f5f7] text-[#1f2022] ${SANS}`}>
      <Rail />
      <FilesPanel />
      <main className="my-5 mr-5 flex min-w-0 flex-1 rounded-[20px] shadow-[0_0_36px_rgba(0,0,0,0.12)]">
        <div className="flex min-w-0 flex-1 overflow-hidden rounded-[20px]">
          <Viewer />
          <Chat />
        </div>
      </main>
    </div>
  );
}
